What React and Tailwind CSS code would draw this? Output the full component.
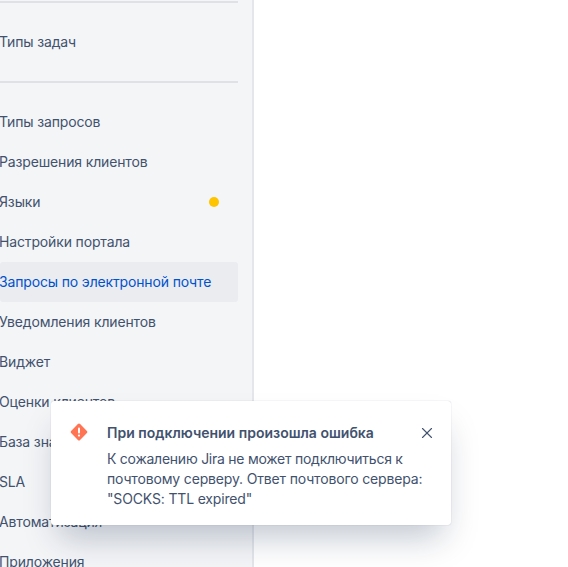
import React from 'react';
import { X } from 'lucide-react';

const items = [
  { label: 'Типы запросов' },
  { label: 'Разрешения клиентов' },
  { label: 'Языки', dot: true },
  { label: 'Настройки портала' },
  { label: 'Запросы по электронной почте', active: true },
  { label: 'Уведомления клиентов' },
  { label: 'Виджет' },
  { label: 'Оценки клиентов' },
  { label: 'База знаний' },
  { label: 'SLA' },
  { label: 'Автоматизация' },
  { label: 'Приложения' },
];

const NavItem = ({ item }) => (
  <div
    className={`flex h-10 items-center justify-between rounded-[3px] pb-0.5 pr-[19px] ${
      item.active ? 'bg-[#ebecf0] text-[#0052cc]' : 'text-[#42526e]'
    }`}
  >
    <span className="-ml-px tracking-[-0.15px]">{item.label}</span>
    {item.dot && <span className="mt-0.5 h-2.5 w-2.5 rounded-full bg-[#ffc400]" />}
  </div>
);

export default function App() {
  return (
    <div className="relative h-[567px] w-[568px] overflow-hidden bg-white font-['Inter',sans-serif] text-[14px]">
      {/* Sidebar */}
      <div className="h-full w-[254px] border-r-2 border-[#e4e6eb] bg-[#f4f5f7] pr-[14px] pt-px">
        <div className="h-0.5 bg-[#dfe1e6]" />
        <div className="pt-[19px]">
          <NavItem item={{ label: 'Типы задач' }} />
        </div>
        <div className="mt-[19px] h-0.5 bg-[#dfe1e6]" />
        <div className="pt-[19px]">
          {items.map((item) => (
            <NavItem key={item.label} item={item} />
          ))}
        </div>
      </div>

      {/* Toast */}
      <div className="absolute left-[51px] top-[401px] flex h-[124px] w-[400px] rounded-[3px] bg-white pl-[18px] pr-[15px] pt-[22px] shadow-[0_20px_32px_-8px_rgba(9,30,66,0.25),0_0_1px_rgba(9,30,66,0.31)]">
        <svg className="mt-[-1px] h-5 w-5 shrink-0" viewBox="0 0 20 20">
          <path
            d="M8.9 2.1a1.6 1.6 0 0 1 2.2 0l6.8 6.8a1.6 1.6 0 0 1 0 2.2l-6.8 6.8a1.6 1.6 0 0 1-2.2 0l-6.8-6.8a1.6 1.6 0 0 1 0-2.2z"
            fill="#ff7452"
          />
          <rect x="9" y="5.5" width="2" height="6" rx="1" fill="#fff" />
          <circle cx="10" cy="13.6" r="1.1" fill="#fff" />
        </svg>
        <div className="ml-[18px] flex-1">
          <div className="flex items-start justify-between">
            <p className="h-5 font-semibold leading-5 text-[#42526e]">При подключении произошла ошибка</p>
            <X className="mt-px h-[18px] w-[18px] text-[#42526e]" strokeWidth={1.5} />
          </div>
          <p className="mt-1.5 leading-5 tracking-[-0.16px] text-[#42526e]">
            <span className="tracking-[-0.25px]">К сожалению Jira не может подключиться к</span>
            <br />
            почтовому серверу. Ответ почтового сервера:
            <br />
            "SOCKS: TTL expired"
          </p>
        </div>
      </div>
    </div>
  );
}
